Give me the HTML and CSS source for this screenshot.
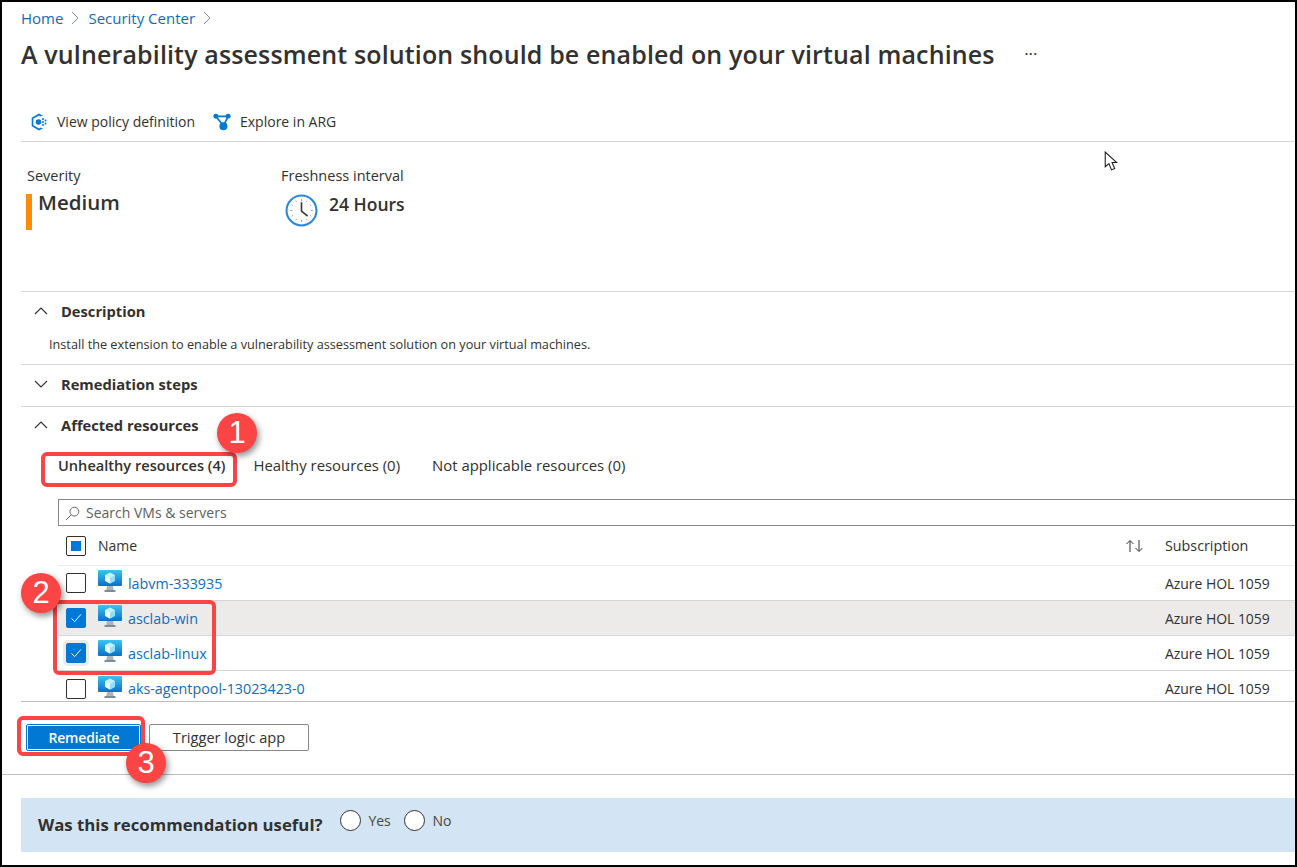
FILE: index.html
```html
<!DOCTYPE html>
<html lang="en">
<head>
<meta charset="utf-8">
<title>Security Center recommendation</title>
<link rel="stylesheet" href="styles.css">
</head>
<body>
<svg class="defs" width="0" height="0" aria-hidden="true">
  <defs>
    <linearGradient id="scr" x1="0" y1="0" x2="0" y2="1"><stop offset="0" stop-color="#3cc5f0"/><stop offset="1" stop-color="#0a6fc9"/></linearGradient>
    <symbol id="vm" viewBox="0 0 24 23">
      <rect x="0" y="0" width="24" height="16" rx="1" fill="url(#scr)"/>
      <path d="M12 2.500l5 2.600v5.600l-5 2.800-5-2.800V5.100z" fill="#c3f1ff"/>
      <path d="M12 8l5-2.900v5.600l-5 2.800z" fill="#8fe0f8"/>
      <path d="M12 8L7 5.100v5.600l5 2.800z" fill="#e8fbff"/>
      <path d="M9 16h6l.8 4.500H8.200z" fill="#a9b4bd"/>
      <rect x="6.500" y="20" width="11" height="2" rx=".5" fill="#7f8c96"/>
    </symbol>
    <symbol id="tick" viewBox="0 0 20 20"><path d="M5 10.500l3.500 3.500L15.500 6" fill="none" stroke="#fff" stroke-width="1.100"/></symbol>
    <symbol id="chev-up" viewBox="0 0 14 8"><path d="M1 7l6-6 6 6" fill="none" stroke="#323130" stroke-width="1.100"/></symbol>
    <symbol id="chev-right" viewBox="0 0 8 14"><path d="M1 1l6 6-6 6" fill="none" stroke="#8a8886" stroke-width="1"/></symbol>
  </defs>
</svg>

<div class="frame">
  <nav class="crumbs">
    <a class="link">Home</a>
    <svg class="crumb-chev"><use href="#chev-right"/></svg>
    <a class="link">Security Center</a>
    <svg class="crumb-chev"><use href="#chev-right"/></svg>
  </nav>

  <header class="title-row">
    <h1 class="title">A vulnerability assessment solution should be enabled on your virtual machines</h1>
    <span class="more">···</span>
  </header>

  <div class="toolbar">
    <span class="tool tool-policy">
      <svg class="tool-icon" viewBox="0 0 18 18">
        <path d="M9 1.500l6.500 3.700v7.600L9 16.500l-6.500-3.700V5.200z" fill="none" stroke="#0078d4" stroke-width="1.600"/>
        <rect x="11" y="3" width="7" height="12" fill="#fff"/>
        <circle cx="8.500" cy="9" r="2.800" fill="#0078d4"/>
        <circle cx="13" cy="6" r="1" fill="#0078d4"/><circle cx="15.500" cy="7.500" r="1" fill="#0078d4"/>
        <circle cx="13" cy="9" r="1" fill="#0078d4"/><circle cx="15.500" cy="10.500" r="1" fill="#0078d4"/>
        <circle cx="13" cy="12" r="1" fill="#0078d4"/>
      </svg>
      View policy definition
    </span>
    <span class="tool tool-arg">
      <svg class="tool-icon arg-icon" viewBox="0 0 19 18">
        <path d="M3 3h13M3 3l8 10M16 3l-5 10" fill="none" stroke="#0078d4" stroke-width="1.800"/>
        <circle cx="3" cy="3" r="2.600" fill="#0078d4"/><circle cx="16" cy="2.800" r="2.600" fill="#0078d4"/><circle cx="11" cy="13.500" r="4.200" fill="#0078d4"/>
      </svg>
      Explore in ARG
    </span>
  </div>

  <section class="summary">
    <div class="sev">
      <div class="label">Severity</div>
      <div class="sev-body"><span class="sev-bar"></span><span class="sev-value">Medium</span></div>
    </div>
    <div class="fresh">
      <div class="label">Freshness interval</div>
      <div class="fresh-body">
        <svg class="clock" viewBox="0 0 32 32">
          <circle cx="16" cy="16" r="14.500" fill="#fff" stroke="#2b88d8" stroke-width="2"/>
          <path d="M16 5v2M16 25v2M5 16h2M25 16h2M10.500 6.500l.7 1.200M21.500 6.500l-.7 1.200M10.500 25.500l.7-1.200M21.500 25.500l-.7-1.200M6.500 10.500l1.200.7M6.500 21.500l1.200-.7M25.500 10.500l-1.200.7M25.500 21.500l-1.200-.7" stroke="#8a8886" stroke-width=".8"/>
          <path d="M16 8v8.500l6 5" fill="none" stroke="#3b3a39" stroke-width="1.600"/>
        </svg>
        <span class="fresh-value">24 Hours</span>
      </div>
    </div>
  </section>

  <section class="acc acc-desc">
    <div class="acc-head"><svg class="chev"><use href="#chev-up"/></svg><span class="acc-title">Description</span></div>
    <p class="acc-text">Install the extension to enable a vulnerability assessment solution on your virtual machines.</p>
  </section>

  <section class="acc acc-steps">
    <div class="acc-head"><svg class="chev chev-down"><use href="#chev-up"/></svg><span class="acc-title">Remediation steps</span></div>
  </section>

  <section class="acc-aff">
    <div class="acc-head"><svg class="chev"><use href="#chev-up"/></svg><span class="acc-title">Affected resources</span></div>
    <div class="tabs">
      <span class="tab tab-on">Unhealthy resources (4)</span>
      <span class="tab tab-two">Healthy resources (0)</span>
      <span class="tab">Not applicable resources (0)</span>
    </div>
    <div class="search">
      <svg class="search-icon" viewBox="0 0 16 16"><circle cx="10" cy="6" r="4.700" fill="none" stroke="#605e5c"/><path d="M6.500 9.500L1 15" stroke="#605e5c"/></svg>
      <span class="search-text">Search VMs &amp; servers</span>
    </div>
    <div class="table">
      <div class="row row-head">
        <span class="box box-mixed"><i></i></span>
        <span class="th-name">Name</span>
        <svg class="sort" viewBox="0 0 20 14"><path d="M5 13V2M1.500 5L5 1.500 8.500 5M14 1v11M10.500 9l3.500 3.500L17.500 9" fill="none" stroke="#323130"/></svg>
        <span class="th-sub">Subscription</span>
      </div>
      <div class="row">
        <span class="box"></span><svg class="vm"><use href="#vm"/></svg><a class="link name">labvm-333935</a><span class="sub">Azure HOL 1059</span>
      </div>
      <div class="row row-sel">
        <span class="box box-on"><svg class="tick"><use href="#tick"/></svg></span><svg class="vm"><use href="#vm"/></svg><a class="link name">asclab-win</a><span class="sub">Azure HOL 1059</span>
      </div>
      <div class="row">
        <span class="box box-on box-hover"><svg class="tick"><use href="#tick"/></svg></span><svg class="vm"><use href="#vm"/></svg><a class="link name">asclab-linux</a><span class="sub">Azure HOL 1059</span>
      </div>
      <div class="row row-last">
        <span class="box"></span><svg class="vm"><use href="#vm"/></svg><a class="link name">aks-agentpool-13023423-0</a><span class="sub">Azure HOL 1059</span>
      </div>
    </div>
  </section>

  <div class="actions">
    <button class="btn btn-primary"><span>Remediate</span></button>
    <button class="btn btn-plain">Trigger logic app</button>
  </div>

  <div class="feedback">
    <strong class="fb-q">Was this recommendation useful?</strong>
    <span class="radio"></span><span class="fb-opt">Yes</span>
    <span class="radio"></span><span class="fb-opt">No</span>
  </div>

  <!-- annotations drawn over the screenshot -->
  <span class="mark mark-tab"></span>
  <span class="mark mark-rows"></span>
  <span class="mark mark-btn"></span>
  <span class="badge badge-1">1</span>
  <span class="badge badge-2">2</span>
  <span class="badge badge-3">3</span>
  <svg class="cursor" viewBox="0 0 13 20"><path d="M1 1v14l3.500-3 2.500 6 3-1.300-2.500-5.700H12z" fill="#fff" stroke="#1b1a19"/></svg>
</div>
</body>
</html>
```

FILE: styles.css
```css
* { box-sizing: border-box; }
html, body { margin: 0; padding: 0; background: #fff; }
body { font-family: "Open Sans", "Noto Sans", sans-serif; color: #323130; }
.defs { position: absolute; }

.frame {
  position: relative;
  width: 1297px;
  height: 867px;
  border: 2px solid #000;
  overflow: hidden;
  background: #fff;
}
.link { color: #0f6cbd; }

.crumbs { display: flex; align-items: center; height: 32px; padding: 0 0 0 19px; font-size: 15px; }
.crumb-chev { width: 8px; height: 14px; margin: 0 9px 0 8px; }

.title-row { display: flex; align-items: center; height: 43px; padding: 0 0 4px 19px; }
.title { margin: 0; font-size: 25px; font-weight: 600; letter-spacing: .14px; white-space: nowrap; color: #323130; }
.more { margin-left: 30px; font-size: 12px; font-weight: 700; letter-spacing: 1px; color: #323130; }

.toolbar { display: flex; align-items: center; height: 65px; margin-left: 19px; padding: 25px 0 0 9px; border-bottom: 1px solid #d6d6d6; font-size: 14px; }
.tool { display: flex; align-items: center; }
.tool-policy { width: 183px; }
.tool-icon { width: 18px; height: 18px; margin-right: 9px; }

.summary { display: flex; height: 150px; margin-left: 19px; border-bottom: 1px solid #d6d6d6; padding-top: 24px; }
.sev { width: 260px; padding-left: 5px; }
.label { font-size: 14.500px; line-height: 20px; }
.sev .label { padding-left: 1px; }
.sev-body { display: flex; margin-top: 8px; }
.sev-bar { width: 6px; height: 36px; background: #ff8c00; margin-right: 6px; }
.sev-value { font-size: 20.500px; font-weight: 600; line-height: 16px; }
.fresh-body { display: flex; margin-top: 8px; padding-left: 4px; }
.clock { width: 33px; height: 33px; margin-right: 11px; }
.fresh-value { font-size: 17.500px; font-weight: 600; line-height: 20px; }

.acc { margin-left: 19px; border-bottom: 1px solid #d6d6d6; }
.acc-desc { height: 73px; }
.acc-steps { height: 42px; }
.acc-head { display: flex; align-items: center; height: 38px; padding-left: 13px; }
.chev { width: 14px; height: 8px; margin-right: 13px; }
.chev-down { transform: rotate(180deg); }
.acc-title { font-size: 14.700px; font-weight: 700; }
.acc-text { margin: 0; padding: 2px 0 0 28px; font-size: 12.700px; line-height: 24px; }

.acc-aff { height: 295px; margin-left: 19px; overflow: hidden; border-bottom: 1px solid #bdbdbd; }
.acc-aff .acc-head { height: 36px; }
.tabs { display: flex; height: 56px; padding: 0 0 12px 37px; align-items: center; gap: 28px; font-size: 14.900px; }
.tab-on { font-weight: 600; font-size: 14.600px; }
.tab-two { margin-right: 4px; }
.search { display: flex; align-items: center; height: 27px; margin-left: 37px; border: 1px solid #8a8886; border-right: 0; padding-left: 6px; }
.search-icon { width: 15px; height: 15px; margin-right: 6px; margin-top: 1px; }
.search-text { font-size: 14px; color: #605e5c; }

.table { margin-left: 37px; }
.row { display: flex; align-items: center; height: 35px; border-bottom: 1px solid #d6d6d6; padding-left: 8px; }
.row-head { height: 40px; border-bottom-color: #edebe9; }
.row-sel { background: #edebe9; }
.row-last { border-bottom: 0; }
.box { position: relative; display: block; flex: none; width: 20px; height: 20px; border: 1px solid #323130; border-radius: 2px; background: #fff; }
.box-mixed i { position: absolute; left: 4px; top: 4px; width: 10px; height: 10px; background: #0078d4; }
.box-on { background: #0078d4; border-color: #0078d4; }
.box-hover { box-shadow: 0 0 0 3px #edebe9; }
.tick { display: block; width: 18px; height: 18px; }
.vm { flex: none; width: 24px; height: 23px; margin: 0 6px 3px 12px; }
.th-name { margin-left: 12px; font-size: 14px; font-weight: 500; }
.sort { flex: none; width: 20px; height: 14px; margin-left: auto; }
.th-sub { flex: none; width: 130px; margin-left: 20px; font-size: 14.300px; font-weight: 500; }
.name { font-size: 14.300px; }
.sub { flex: none; width: 130px; margin-left: auto; font-size: 14px; letter-spacing: -.05px; }

.actions { display: flex; align-items: center; height: 73px; padding: 0 0 2px 24px; gap: 8px; border-bottom: 1px solid #bdbdbd; }
.btn { height: 27px; font-family: inherit; font-size: 14px; padding: 0; border-radius: 2px; }
.btn-primary { width: 115px; border: 1px solid #0078d4; background: #fff; padding: 1px; font-weight: 600; color: #fff; letter-spacing: -.2px; }
.btn-primary span { display: block; height: 23px; line-height: 23px; padding-left: 1px; background: #0078d4; }
.btn-plain { width: 160px; border: 1px solid #8a8886; background: #fff; font-size: 14.600px; font-weight: 500; color: #323130; }

.feedback { display: flex; align-items: center; height: 54px; margin: 23px 0 0 19px; padding: 0 0 10px 17px; background: #d3e5f4; }
.fb-q { font-size: 16.800px; font-weight: 700; margin-right: 17px; margin-top: 8px; }
.radio { width: 21px; height: 21px; border: 1px solid #323130; border-radius: 50%; background: #fff; margin-right: 8px; }
.fb-opt { font-size: 14px; letter-spacing: -.1px; margin-right: 13px; color: #484644; }

.mark { position: absolute; border: 4px solid #fb4444; border-radius: 6px; }
.mark-tab { left: 39px; top: 450px; width: 196px; height: 35px; }
.mark-rows { left: 51px; top: 598px; width: 163px; height: 75px; }
.mark-btn { left: 15px; top: 714px; width: 128px; height: 40px; }
.badge { position: absolute; width: 40px; height: 40px; border-radius: 50%; background: #fb4444; color: #fff; font-family: "Liberation Sans", Arial, sans-serif; font-size: 31px; line-height: 40px; text-align: center; box-shadow: 2px 3px 6px rgba(0, 0, 0, .45); }
.badge-1 { left: 215px; top: 411px; }
.badge-2 { left: 19px; top: 571px; }
.badge-3 { left: 124px; top: 741px; }
.cursor { position: absolute; left: 1102px; top: 149px; width: 14px; height: 21px; }
```
